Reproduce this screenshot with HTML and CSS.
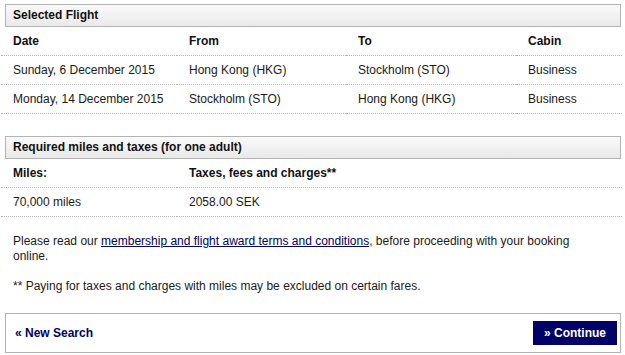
FILE: index.html
```html
<!DOCTYPE html>
<html lang="en">
<head>
    <meta charset="UTF-8">
    <meta name="viewport" content="width=device-width, initial-scale=1.0">
    <title>Award Booking - Selected Flight</title>
    <link rel="stylesheet" href="styles.css">
</head>
<body>
    <div class="page">
        <h2 class="section-head">Selected Flight</h2>
        <table class="info-table flights">
            <tr>
                <th>Date</th>
                <th>From</th>
                <th>To</th>
                <th>Cabin</th>
            </tr>
            <tr>
                <td>Sunday, 6 December 2015</td>
                <td>Hong Kong (HKG)</td>
                <td>Stockholm (STO)</td>
                <td>Business</td>
            </tr>
            <tr>
                <td>Monday, 14 December 2015</td>
                <td>Stockholm (STO)</td>
                <td>Hong Kong (HKG)</td>
                <td>Business</td>
            </tr>
        </table>

        <h2 class="section-head second">Required miles and taxes (for one adult)</h2>
        <table class="info-table miles">
            <tr>
                <th>Miles:</th>
                <th>Taxes, fees and charges**</th>
            </tr>
            <tr>
                <td>70,000 miles</td>
                <td>2058.00 SEK</td>
            </tr>
        </table>

        <p class="note first">
            Please read our <a href="#">membership and flight award terms and conditions</a>, before proceeding with your booking online.
        </p>
        <p class="note">** Paying for taxes and charges with miles may be excluded on certain fares.</p>

        <div class="actions">
            <a href="#" class="back-link">&laquo; New Search</a>
            <a href="#" class="continue-btn">&raquo; Continue</a>
        </div>
    </div>
</body>
</html>
```

FILE: styles.css
```css
body {
    margin: 0;
    background: #fff;
    font-family: "Liberation Sans", Arial, sans-serif;
    font-size: 12px;
    color: #1a1a1a;
}

.page {
    width: 621px;
    margin-left: 1px;
    padding-top: 4px;
}

.section-head {
    margin: 0 1px 0 4px;
    height: 21px;
    line-height: 21px;
    padding-left: 7px;
    font-size: 12px;
    font-weight: bold;
    color: #111;
    border: 1px solid #b3b3b3;
    background: linear-gradient(to bottom, #fafafa 0%, #e9e9e9 100%);
}

.section-head.second {
    margin-top: 22px;
}

.info-table {
    width: 100%;
    border-collapse: collapse;
}

.info-table th,
.info-table td {
    padding: 0 0 0 12px;
    text-align: left;
    border-bottom: 1px dotted #b5b5b5;
    white-space: nowrap;
}

.info-table th {
    height: 28px;
    font-weight: bold;
    color: #111;
}

.info-table td {
    height: 28px;
}

.flights th:nth-child(1) { width: 164px; }
.flights th:nth-child(2) { width: 157px; }
.flights th:nth-child(3) { width: 158px; }

.miles th:nth-child(1) { width: 164px; }

.note {
    margin: 15px 0 0;
    padding-left: 12px;
    padding-right: 40px;
    line-height: 15px;
}

.note.first {
    margin-top: 17px;
}

.note a {
    color: #000066;
}

.actions {
    margin: 19px 1px 0 4px;
    height: 38px;
    border: 1px solid #b3b3b3;
    display: flex;
    align-items: center;
    justify-content: space-between;
    padding: 0 3px 0 9px;
}

.back-link {
    color: #000066;
    font-weight: bold;
    text-decoration: none;
}

.continue-btn {
    display: inline-block;
    height: 24px;
    line-height: 24px;
    padding: 0 11px;
    background: #000066;
    color: #fff;
    font-weight: bold;
    text-decoration: none;
}
```
